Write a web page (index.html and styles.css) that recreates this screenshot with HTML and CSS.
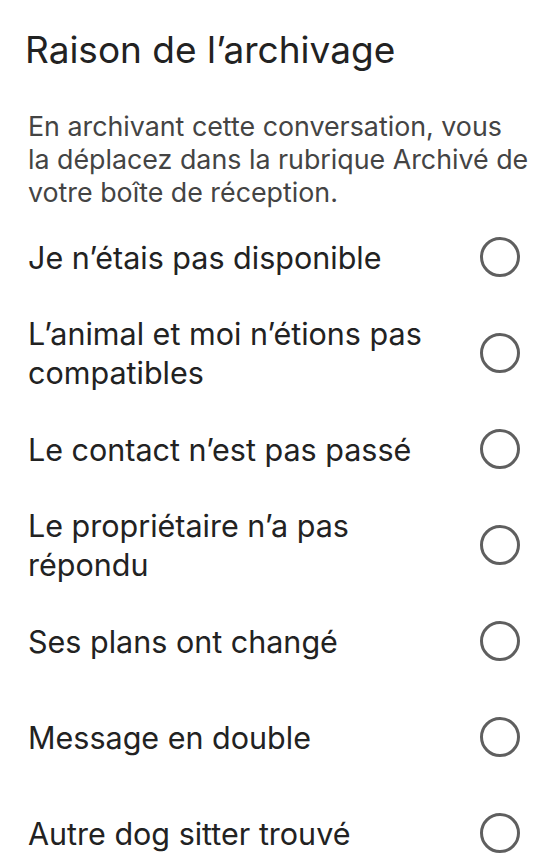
FILE: index.html
```html
<!DOCTYPE html>
<html lang="fr">
<head>
    <meta charset="UTF-8">
    <meta name="viewport" content="width=device-width, initial-scale=1.0">
    <title>Raison de l'archivage</title>
    <link rel="stylesheet" href="styles.css">
</head>
<body>
    <div class="sheet">
        <h1>Raison de l’archivage</h1>
        <p class="intro">En archivant cette conversation, vous la déplacez dans la rubrique Archivé de votre boîte de réception.</p>
        <form class="reasons">
            <label class="reason">
                <span class="reason-text">Je n’étais pas disponible</span>
                <input type="radio" name="reason">
                <span class="radio"></span>
            </label>
            <label class="reason">
                <span class="reason-text">L’animal et moi n’étions pas compatibles</span>
                <input type="radio" name="reason">
                <span class="radio"></span>
            </label>
            <label class="reason">
                <span class="reason-text">Le contact n’est pas passé</span>
                <input type="radio" name="reason">
                <span class="radio"></span>
            </label>
            <label class="reason">
                <span class="reason-text">Le propriétaire n’a pas répondu</span>
                <input type="radio" name="reason">
                <span class="radio"></span>
            </label>
            <label class="reason">
                <span class="reason-text">Ses plans ont changé</span>
                <input type="radio" name="reason">
                <span class="radio"></span>
            </label>
            <label class="reason">
                <span class="reason-text">Message en double</span>
                <input type="radio" name="reason">
                <span class="radio"></span>
            </label>
            <label class="reason">
                <span class="reason-text">Autre dog sitter trouvé</span>
                <input type="radio" name="reason">
                <span class="radio"></span>
            </label>
        </form>
    </div>
</body>
</html>
```

FILE: styles.css
```css
body {
    margin: 0;
    background: #fff;
    font-family: Inter, "Open Sans", sans-serif;
    color: #222;
}

.sheet {
    padding: 28px 24px 0 28px;
}

h1 {
    margin: 0 0 38px -3px;
    font-size: 37px;
    line-height: 44px;
    font-weight: 400;
    color: #222;
}

.intro {
    margin: 0;
    font-size: 26.8px;
    line-height: 33px;
    color: #444;
}

.reason {
    display: flex;
    align-items: center;
    justify-content: space-between;
    min-height: 96px;
    padding-right: 10px;
    cursor: pointer;
}

.reason-text {
    max-width: 420px;
    font-size: 30.5px;
    line-height: 39px;
    color: #222;
}

.reason input {
    display: none;
}

.radio {
    flex-shrink: 0;
    width: 34px;
    height: 34px;
    border: 3px solid #5f5f5f;
    border-radius: 50%;
}
```
